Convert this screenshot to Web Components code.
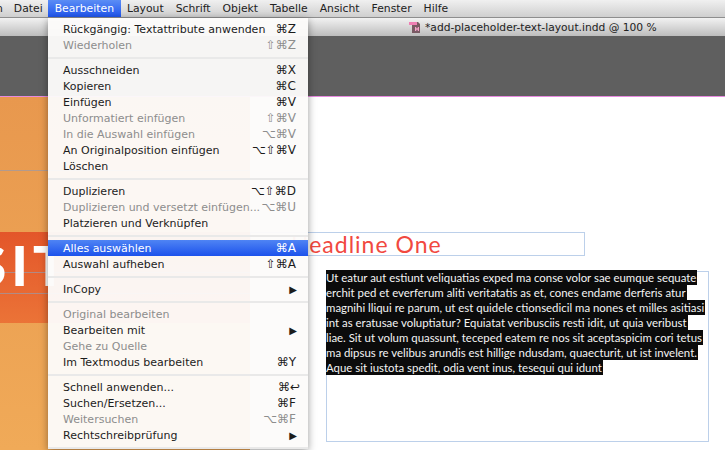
<!DOCTYPE html>
<html lang="de">
<head>
<meta charset="utf-8">
<title>InDesign Bearbeiten menu</title>
<style>
  html, body { margin: 0; height: 100%; overflow: hidden; background: #fff; }
  body { font-family: "DejaVu Sans", sans-serif; }
</style>
</head>
<body>
<app-window>
  <menu-bar slot="bar">
    <bar-item>n</bar-item>
    <bar-item>Datei</bar-item>
    <bar-item active>Bearbeiten</bar-item>
    <bar-item>Layout</bar-item>
    <bar-item>Schrift</bar-item>
    <bar-item>Objekt</bar-item>
    <bar-item>Tabelle</bar-item>
    <bar-item>Ansicht</bar-item>
    <bar-item>Fenster</bar-item>
    <bar-item>Hilfe</bar-item>
  </menu-bar>
  <doc-title slot="title">*add-placeholder-text-layout.indd @ 100 %</doc-title>
  <doc-canvas slot="canvas">
    <text-frame style="left:250px;top:135px;width:335px;height:24px"><span style="font-size:23px;letter-spacing:1px;color:#f1493f;line-height:22px;margin-left:40px;display:block;white-space:nowrap">Headline One</span></text-frame>
    <text-frame style="left:326px;top:174px;width:383px;height:171px"><selected-copy></selected-copy></text-frame>
  </doc-canvas>
  <app-menu slot="menu">
    <menu-item keys="⌘Z">Rückgängig: Textattribute anwenden</menu-item>
    <menu-item keys="⇧⌘Z" disabled>Wiederholen</menu-item>
    <menu-sep></menu-sep>
    <menu-item keys="⌘X">Ausschneiden</menu-item>
    <menu-item keys="⌘C">Kopieren</menu-item>
    <menu-item keys="⌘V">Einfügen</menu-item>
    <menu-item keys="⇧⌘V" disabled>Unformatiert einfügen</menu-item>
    <menu-item keys="⌥⌘V" disabled>In die Auswahl einfügen</menu-item>
    <menu-item keys="⌥⇧⌘V">An Originalposition einfügen</menu-item>
    <menu-item>Löschen</menu-item>
    <menu-sep></menu-sep>
    <menu-item keys="⌥⇧⌘D">Duplizieren</menu-item>
    <menu-item keys="⌥⌘U" disabled>Duplizieren und versetzt einfügen...</menu-item>
    <menu-item>Platzieren und Verknüpfen</menu-item>
    <menu-sep></menu-sep>
    <menu-item keys="⌘A" active>Alles auswählen</menu-item>
    <menu-item keys="⇧⌘A">Auswahl aufheben</menu-item>
    <menu-sep></menu-sep>
    <menu-item submenu>InCopy</menu-item>
    <menu-sep></menu-sep>
    <menu-item disabled>Original bearbeiten</menu-item>
    <menu-item submenu>Bearbeiten mit</menu-item>
    <menu-item disabled>Gehe zu Quelle</menu-item>
    <menu-item keys="⌘Y">Im Textmodus bearbeiten</menu-item>
    <menu-sep></menu-sep>
    <menu-item keys="⌘↩" style="padding-right:8px">Schnell anwenden...</menu-item>
    <menu-item keys="⌘F">Suchen/Ersetzen...</menu-item>
    <menu-item keys="⌥⌘F" disabled>Weitersuchen</menu-item>
    <menu-item submenu>Rechtschreibprüfung</menu-item>
    <menu-sep></menu-sep>
  </app-menu>
</app-window>

<script>
// small helper, every element just sets its shadow html once
class Base extends HTMLElement {
    constructor() {
        super();
        this.attachShadow({ mode: 'open' });
        this.shadowRoot.innerHTML = this.render();
    }
    render() { return '<slot></slot>'; }
}

class AppWindow extends Base {
    render() {
        return `
            <style>
                :host { display: flex; flex-direction: column; position: relative; width: 725px; height: 450px; overflow: hidden; }
                .pasteboard { height: 61px; background: #5f5f5f; border-bottom: 1px solid #e88ae0; box-sizing: border-box; }
                .menu { position: absolute; left: 48px; top: 18px; }
            </style>
            <slot name="bar"></slot>
            <slot name="title"></slot>
            <div class="pasteboard"></div>
            <slot name="canvas"></slot>
            <div class="menu"><slot name="menu"></slot></div>
        `;
    }
}

class MenuBar extends Base {
    render() {
        return `
            <style>
                :host { display: flex; height: 18px; background: linear-gradient(#f0f0f0, #cfcfcf); border-bottom: 1px solid #8e8e8e; box-sizing: border-box; }
            </style>
            <slot></slot>
        `;
    }
}

class BarItem extends Base {
    render() {
        return `
            <style>
                :host { display: block; padding: 0 6px; font-size: 10.8px; line-height: 17px; color: #222; white-space: nowrap; }
                :host(:first-child) { padding: 0 5px 0 0; margin-left: -4px; }
                :host([active]) { margin-left: -1px; padding: 0 7px; background: linear-gradient(#5b8df5, #1f55ee); color: #fff; }
            </style>
            <slot></slot>
        `;
    }
}

class DocTitle extends Base {
    render() {
        return `
            <style>
                :host { display: flex; align-items: center; height: 18px; padding-left: 409px; background: linear-gradient(#f2f2f2, #bdbdbd); font-size: 10.7px; color: #222; box-sizing: border-box; white-space: nowrap; }
                svg { margin-right: 3px; }
            </style>
            <svg width="13" height="12" viewBox="0 0 13 12">
                <path d="M3 1h6l2 2v9H3z" fill="#7a5a64"/>
                <path d="M0 1h8v3H0z" fill="#ef7fb4"/>
                <path d="M6 6h1l1 2 1-2h1v4H9V8l-1 2-1-2v2H6z" fill="#f3a2c8"/>
            </svg>
            <slot></slot>
        `;
    }
}

class DocCanvas extends Base {
    render() {
        return `
            <style>
                :host { display: block; position: relative; flex: 1; background: #fff; font-family: Lato, sans-serif; }
                .page { position: absolute; left: 0; top: 0; width: 250px; height: 100%; background: linear-gradient(#e8984e, #f0aa58); overflow: hidden; }
                .band { position: absolute; left: 0; top: 135px; width: 100%; height: 91px; background: linear-gradient(#e3562a, #eb7337); }
                .rule { position: absolute; left: 0; width: 100%; height: 1px; background: #9a9aa8; opacity: .7; }
                .big { position: absolute; left: -24px; top: 138px; font: 900 55px/60px Lato, sans-serif; letter-spacing: 5px; color: #fff; }
            </style>
            <div class="page">
                <div class="band"></div>
                <div class="rule" style="top:73px"></div>
                <div class="rule" style="top:175px"></div>
                <div class="rule" style="top:196px"></div>
                <div class="big">SIT</div>
            </div>
            <slot></slot>
        `;
    }
}

class TextFrame extends Base {
    render() {
        return `
            <style>
                :host { display: block; position: absolute; box-sizing: border-box; border: 1px solid #bcd0ea; font-family: Lato, sans-serif; }
            </style>
            <slot></slot>
        `;
    }
}

class SelectedCopy extends Base {
    render() {
        const lines = [
            'Ut eatur aut estiunt veliquatias exped ma conse volor sae eumque sequate',
            'erchit ped et everferum aliti veritatatis as et, cones endame derferis atur',
            'magnihi lliqui re parum, ut est quidele ctionsedicil ma nones et milles asitiasi',
            'int as eratusae voluptiatur? Equiatat veribusciis resti idit, ut quia veribust',
            'liae. Sit ut volum quassunt, teceped eatem re nos sit aceptaspicim cori tetus',
            'ma dipsus re velibus arundis est hillige ndusdam, quaecturit, ut ist invelent.',
            'Aque sit iustota spedit, odia vent inus, tesequi qui idunt'
        ];
        return `
            <style>
                :host { display: flex; flex-direction: column; align-items: flex-start; margin: -2px 0 0 -1px; }
                span { display: block; padding-right: 1px; background: #0b0b0b; color: #f4f4f4; font-size: 11.42px; line-height: 15px; white-space: nowrap; }
            </style>
            ${lines.map(line => `<span>${line}</span>`).join('')}
        `;
    }
}

class AppMenu extends Base {
    render() {
        return `
            <style>
                :host { display: block; position: relative; width: 260px; padding-top: 3px; background: rgba(252,251,250,.96); box-shadow: 0 2px 8px rgba(0,0,0,.4); }
            </style>
            <slot></slot>
        `;
    }
}

class MenuItem extends Base {
    render() {
        const keys = this.getAttribute('keys') || '';
        const arrow = this.hasAttribute('submenu') ? '<span class="arrow">▶</span>' : '';
        return `
            <style>
                :host { display: flex; justify-content: space-between; align-items: center; height: 16px; padding: 0 12px 0 15px; font-size: 11px; color: #1c1c1c; white-space: nowrap; }
                :host([disabled]) { color: #8d8d8d; }
                :host([active]) { background: linear-gradient(#4f84f4, #1c52ec); color: #fff; }
                .keys { font-size: 12px; letter-spacing: 0; }
                .arrow { font-size: 10px; margin-right: -1px; }
            </style>
            <span><slot></slot></span>
            <span class="keys">${keys}</span>${arrow}
        `;
    }
}

class MenuSep extends Base {
    render() {
        return `
            <style>
                :host { display: block; height: 2px; margin: 4px 0 3px; background: #e9e9e9; }
            </style>
        `;
    }
}

customElements.define('app-window', AppWindow);
customElements.define('menu-bar', MenuBar);
customElements.define('bar-item', BarItem);
customElements.define('doc-title', DocTitle);
customElements.define('doc-canvas', DocCanvas);
customElements.define('text-frame', TextFrame);
customElements.define('selected-copy', SelectedCopy);
customElements.define('app-menu', AppMenu);
customElements.define('menu-item', MenuItem);
customElements.define('menu-sep', MenuSep);
</script>
</body>
</html>
